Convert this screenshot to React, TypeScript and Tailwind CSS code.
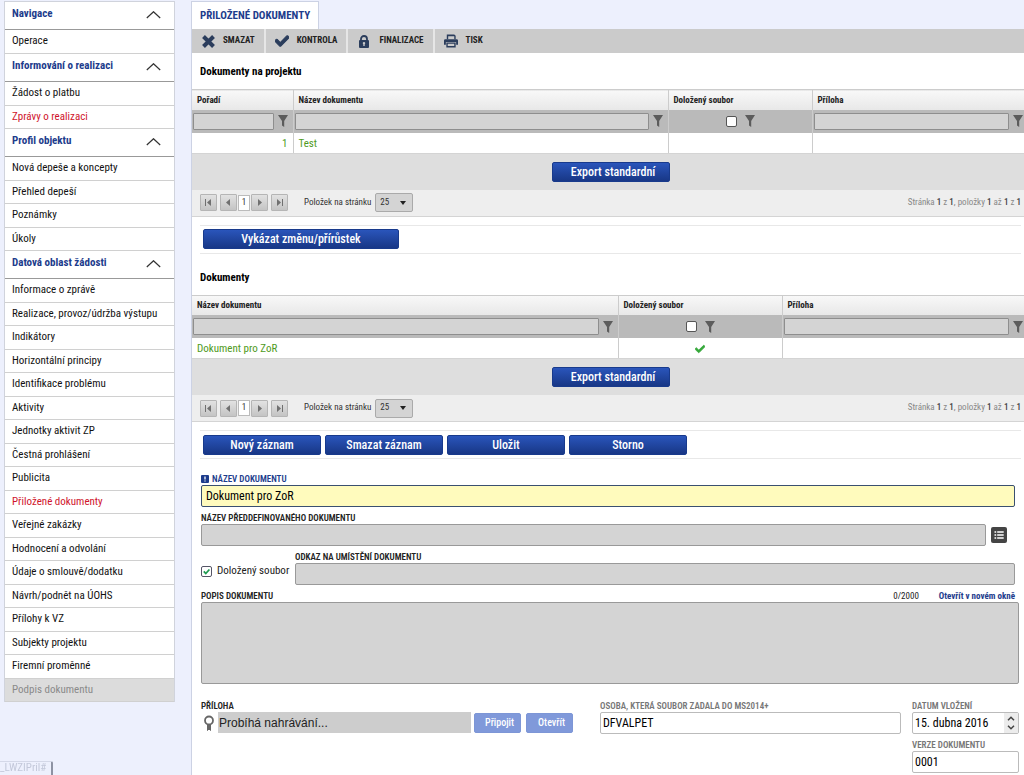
import type { ReactNode } from "react";
import { FaCheck } from "react-icons/fa";

interface NavItem {
  label: string;
  active?: boolean;
  disabled?: boolean;
}

interface NavSection {
  title: string;
  items: NavItem[];
}

const NAVIGATION: NavSection[] = [
  { title: "Navigace", items: [{ label: "Operace" }] },
  {
    title: "Informování o realizaci",
    items: [{ label: "Žádost o platbu" }, { label: "Zprávy o realizaci", active: true }],
  },
  {
    title: "Profil objektu",
    items: [
      { label: "Nová depeše a koncepty" },
      { label: "Přehled depeší" },
      { label: "Poznámky" },
      { label: "Úkoly" },
    ],
  },
  {
    title: "Datová oblast žádosti",
    items: [
      { label: "Informace o zprávě" },
      { label: "Realizace, provoz/údržba výstupu" },
      { label: "Indikátory" },
      { label: "Horizontální principy" },
      { label: "Identifikace problému" },
      { label: "Aktivity" },
      { label: "Jednotky aktivit ZP" },
      { label: "Čestná prohlášení" },
      { label: "Publicita" },
      { label: "Přiložené dokumenty", active: true },
      { label: "Veřejné zakázky" },
      { label: "Hodnocení a odvolání" },
      { label: "Údaje o smlouvě/dodatku" },
      { label: "Návrh/podnět na ÚOHS" },
      { label: "Přílohy k VZ" },
      { label: "Subjekty projektu" },
      { label: "Firemní proměnné" },
      { label: "Podpis dokumentu", disabled: true },
    ],
  },
];

const FIELD = "block h-[22px] rounded-[2px] border text-[12px] leading-5 text-black outline-none";
const FIELD_GRAY = `${FIELD} border-[#999] bg-[#d4d4d4] px-1`;
const FIELD_WHITE = `${FIELD} border-[#bbb] bg-white px-[2px]`;
const LABEL = "text-[9px] leading-3 font-semibold uppercase";

function navItemClass({ active, disabled }: NavItem): string {
  if (disabled) return "bg-[#dcdcdc] text-[#8a8a8a]";
  if (active) return "text-[#d0142c]";
  return "text-[#111]";
}

function Sidebar() {
  return (
    <nav className="mt-px w-[171px] shrink-0 self-start border-x border-t border-[#d0d3dc] bg-white">
      {NAVIGATION.map((section) => (
        <section key={section.title}>
          <button
            type="button"
            className="flex h-7 w-full items-center justify-between border-b border-[#999] pr-[13px] pb-[2px] pl-[7px] text-[11px] font-bold text-[#1d3c8c]"
          >
            {section.title}
            <svg className="h-2 w-[15px]" viewBox="0 0 15 8" fill="none" stroke="#333" strokeWidth="1.2">
              <path d="M.8 7 7.500 .7l6.700 6.300" />
            </svg>
          </button>
          <ul>
            {section.items.map((item) => (
              <li key={item.label} className="border-b border-[#d0d0d0] odd:h-6 even:h-[23px]">
                <a
                  href="#"
                  className={`flex h-full items-center pl-[7px] text-[11px] whitespace-nowrap ${navItemClass(item)}`}
                >
                  {item.label}
                </a>
              </li>
            ))}
          </ul>
        </section>
      ))}
    </nav>
  );
}

function CrossIcon() {
  return (
    <svg className="h-[13px] w-[13px]" viewBox="0 0 13 13" stroke="#2b3d5c" strokeWidth="4">
      <path d="m1.500 1.500 10 10M11.500 1.500l-10 10" />
    </svg>
  );
}

function LockIcon() {
  return (
    <svg className="h-[13px] w-3" viewBox="0 0 12 13" fill="#2b3d5c">
      <path d="M3 5.500V4a3 3 0 0 1 6 0v1.500" fill="none" stroke="#2b3d5c" strokeWidth="1.8" />
      <rect x="1" y="5" width="10" height="8" rx="1" />
      <path d="M6 7a1.200 1.200 0 0 1 .7 2.200V11H5.300V9.200A1.200 1.200 0 0 1 6 7Z" fill="#cbcbcb" />
    </svg>
  );
}

function PrintIcon() {
  return (
    <svg className="h-[14px] w-[15px]" viewBox="0 0 15 14" fill="#2b3d5c">
      <path d="M3 0h8l1.500 1.500V5H11V2H4.500v3H3z" />
      <path d="M1.500 5h12A1.500 1.500 0 0 1 15 6.500V11h-2V8H2v3H0V6.500A1.500 1.500 0 0 1 1.500 5Z" />
      <path d="M2.500 8.500h10V14h-10zM4 10v2.400h7V10z" fillRule="evenodd" />
    </svg>
  );
}

function ToolbarButton({ icon, label }: { icon: ReactNode; label: string }) {
  return (
    <button
      type="button"
      className="flex items-center gap-2 border-r-2 border-[#e6e6e6] px-[9px] text-[9px] font-bold text-[#222] uppercase last:border-r-0"
    >
      <span className="flex w-[14px] justify-center">{icon}</span>
      {label}
    </button>
  );
}

function FunnelButton({ label }: { label: string }) {
  return (
    <button type="button" aria-label={label} className="shrink-0">
      <svg className="block h-3 w-[10px]" viewBox="0 0 10 12" fill="#5c5c5c">
        <path d="M0 0h10L6.200 6v6L4 10.500V6z" />
      </svg>
    </button>
  );
}

function FilterText({ column }: { column: string }) {
  return (
    <div className="flex items-center gap-1">
      <input
        type="text"
        aria-label={`Filtr: ${column}`}
        className="h-[17px] w-0 min-w-0 grow rounded-[1px] border border-[#8e8e8e] bg-[#d4d4d4] px-1 text-[11px] outline-none"
      />
      <FunnelButton label={`Filtrovat ${column}`} />
    </div>
  );
}

function FilterCheck({ column }: { column: string }) {
  return (
    <div className="flex items-center justify-center gap-2">
      <input
        type="checkbox"
        aria-label={`Filtr: ${column}`}
        className="h-[11px] w-[11px] appearance-none rounded-[2px] border border-[#555] bg-white"
      />
      <FunnelButton label={`Filtrovat ${column}`} />
    </div>
  );
}

function BlueButton({ children, className }: { children: ReactNode; className: string }) {
  return (
    <button
      type="button"
      className={`rounded-[2px] border border-[#183a8c] bg-linear-to-b from-[#2a55bb] to-[#183786] text-[12px] font-medium text-white ${className}`}
    >
      {children}
    </button>
  );
}

interface Column {
  name: string;
  width?: string;
  filter: "text" | "check";
}

interface Cell {
  content: ReactNode;
  align?: string;
}

function DataTable({ columns, cells }: { columns: Column[]; cells: Cell[] }) {
  return (
    <table className="w-full table-fixed border-collapse">
      <colgroup>
        {columns.map((column) => (
          <col key={column.name} className={column.width} />
        ))}
      </colgroup>
      <thead>
        <tr className="h-5 border-t border-[#ccc] bg-linear-to-b from-[#f8f8f8] to-[#e8e8e8]">
          {columns.map((column) => (
            <th
              key={column.name}
              className="border-r border-[#ccc] p-0 pl-[5px] text-left text-[9px] leading-4 font-bold text-[#222] last:border-r-0"
            >
              {column.name}
            </th>
          ))}
        </tr>
        <tr className="h-[23px] bg-[#bababa]">
          {columns.map((column) =>
            column.filter === "text" ? (
              <td key={column.name} className="border-r border-[#ccc] py-0 pr-[5px] pl-px last:border-r-0 last:pr-px">
                <FilterText column={column.name} />
              </td>
            ) : (
              <td key={column.name} className="border-r border-[#ccc] p-0">
                <FilterCheck column={column.name} />
              </td>
            ),
          )}
        </tr>
      </thead>
      <tbody>
        <tr className="h-5 bg-white">
          {cells.map((cell, i) => (
            <td
              key={columns[i].name}
              className={`border-r border-[#ccc] px-[5px] pt-[2px] pb-0 text-[11px] leading-4 text-[#4f9a22] last:border-r-0 ${cell.align ?? "text-left"}`}
            >
              {cell.content}
            </td>
          ))}
        </tr>
      </tbody>
    </table>
  );
}

function PagerButton({ label, d }: { label: string; d: string }) {
  return (
    <button
      type="button"
      aria-label={label}
      className="flex h-[17px] w-[17px] items-center justify-center rounded-[1px] border border-[#b5b5b5] bg-linear-to-b from-[#e2e2e2] to-[#c4c4c4]"
    >
      <svg className="h-[7px] w-[7px]" viewBox="0 0 7 7" fill="#707070">
        <path d={d} />
      </svg>
    </button>
  );
}

function TableFooter({ id }: { id: string }) {
  return (
    <>
      <div className="flex h-[37px] items-center justify-center border-t border-[#d4d4d4] bg-[#dedede] pl-[6px]">
        <BlueButton className="h-5 w-[118px] pl-1">Export standardní</BlueButton>
      </div>
      <div className="flex h-[27px] items-center border-b border-[#d4d4d4] bg-[#eee] pr-[3px] pl-2 text-[9px] text-[#333]">
        <div className="flex items-center gap-[3px]">
          <PagerButton label="První stránka" d="M0 0h1v7H0zM6 0v7L2 3.500z" />
          <div className="flex items-center gap-[1px]">
            <PagerButton label="Předchozí stránka" d="M5 0v7L1 3.500z" />
            <span className="flex h-4 w-3 items-center justify-center border border-[#bbb] bg-white">1</span>
            <PagerButton label="Další stránka" d="M2 0v7l4-3.500z" />
          </div>
          <PagerButton label="Poslední stránka" d="M6 0h1v7H6zM1 0v7l4-3.500z" />
        </div>
        <label htmlFor={id} className="mr-1 ml-4">
          Položek na stránku
        </label>
        <div className="grid items-center">
          <select
            id={id}
            defaultValue="25"
            className="col-start-1 row-start-1 h-[19px] w-[38px] appearance-none rounded-[2px] border border-[#aaa] bg-[#d4d4d4] pl-1"
          >
            <option>25</option>
            <option>50</option>
          </select>
          <svg
            className="pointer-events-none col-start-1 row-start-1 mr-[7px] h-1 w-[6px] justify-self-end"
            viewBox="0 0 6 4"
            fill="#222"
          >
            <path d="M0 0h6L3 4z" />
          </svg>
        </div>
        <p className="ml-auto text-[#888]">
          Stránka <b className="font-medium text-[#444]">1</b> z <b className="font-medium text-[#444]">1</b>, položky{" "}
          <b className="font-medium text-[#444]">1</b> až <b className="font-medium text-[#444]">1</b> z{" "}
          <b className="font-medium text-[#444]">1</b>
        </p>
      </div>
    </>
  );
}

function ActionBar({ children }: { children: ReactNode }) {
  return (
    <div className="mt-2 mr-[3px] ml-2 flex h-[29px] items-center gap-1 border-y border-[#e8e8e8] px-[3px]">
      {children}
    </div>
  );
}

function DocumentForm() {
  return (
    <form className="flex flex-col pt-[14px] pr-[9px] pl-[9px] text-[#222]">
      <label htmlFor="nazev" className={`${LABEL} flex items-center gap-[3px] text-[#1d3c8c]`}>
        <svg className="h-2 w-2" viewBox="0 0 8 8">
          <rect width="8" height="8" rx="1" fill="#1d3c8c" />
          <path d="M4 1.500v3M4 5.500v1" stroke="#fff" strokeWidth="1.300" />
        </svg>
        Název dokumentu
      </label>
      <input id="nazev" defaultValue="Dokument pro ZoR" className={`${FIELD} border-[#3a5070] bg-[#fffbbd] px-1`} />

      <label htmlFor="preddef" className={`${LABEL} mt-[5px]`}>
        Název předdefinovaného dokumentu
      </label>
      <div className="flex items-center gap-[5px] pr-2">
        <input id="preddef" readOnly className={`${FIELD_GRAY} w-0 grow`} />
        <button type="button" aria-label="Vybrat ze seznamu">
          <svg className="block h-4 w-4" viewBox="0 0 16 16">
            <rect width="16" height="16" rx="2" fill="#444" />
            <path
              d="M3.500 5h1.700M3.500 8h1.700M3.500 11h1.700M6.200 5h6.500M6.200 8h6.500M6.200 11h6.500"
              stroke="#fff"
              strokeWidth="1.500"
            />
          </svg>
        </button>
      </div>

      <div className="mt-[5px] flex items-end gap-1">
        <label className="flex h-[27px] w-[90px] shrink-0 items-center gap-[5px] text-[11px] whitespace-nowrap">
          <span className="grid">
            <input
              type="checkbox"
              defaultChecked
              className="col-start-1 row-start-1 h-[11px] w-[11px] appearance-none rounded-[2px] border border-[#556] bg-white"
            />
            <svg
              className="pointer-events-none col-start-1 row-start-1 h-[11px] w-[11px]"
              viewBox="0 0 11 11"
              fill="none"
              stroke="#1e9a50"
              strokeWidth="1.800"
            >
              <path d="m2.800 5.300 2 2.200 3.600-4" />
            </svg>
          </span>
          Doložený soubor
        </label>
        <div className="grow">
          <label htmlFor="odkaz" className={`${LABEL} block`}>
            Odkaz na umístění dokumentu
          </label>
          <input id="odkaz" readOnly className={`${FIELD_GRAY} w-full`} />
        </div>
      </div>

      <div className="mt-[5px] flex items-center">
        <label htmlFor="popis" className={LABEL}>
          Popis dokumentu
        </label>
        <span className="ml-auto text-[9px] leading-3">0/2000</span>
        <a href="#" className="ml-5 text-[9px] leading-3 font-bold text-[#1d3c8c]">
          Otevřít v novém okně
        </a>
      </div>
      <textarea
        id="popis"
        readOnly
        className="-mr-1 h-[82px] resize-none rounded-[2px] border border-[#999] bg-[#d4d4d4] outline-none"
      />

      <div className="-mr-1 mt-4 flex items-start">
        <div className="w-[372px]">
          <label htmlFor="priloha" className={`${LABEL} block`}>
            Příloha
          </label>
          <div className="flex items-center">
            <svg className="mr-[3px] ml-[2px] h-4 w-3 shrink-0" viewBox="0 0 12 16" fill="none" stroke="#666">
              <circle cx="6" cy="5.500" r="4" strokeWidth="1.800" />
              <path d="M4.500 9.500v6L6 14l1.500 1.500v-6z" fill="#666" strokeWidth="1" />
            </svg>
            <input
              id="priloha"
              readOnly
              defaultValue="Probíhá nahrávání..."
              className="h-[21px] w-0 grow bg-[#cdcdcd] px-px font-['Liberation_Sans',sans-serif] text-[12px] outline-none"
            />
            <button
              type="button"
              disabled
              className="ml-[3px] h-5 w-[47px] rounded-[2px] border border-[#7d96d6] bg-[#8099da] pl-1 text-[10px] font-medium text-white"
            >
              Připojit
            </button>
            <button
              type="button"
              disabled
              className="ml-[5px] h-5 w-[47px] rounded-[2px] border border-[#7d96d6] bg-[#8099da] pl-1 text-[10px] font-medium text-white"
            >
              Otevřít
            </button>
          </div>
        </div>
        <div className="ml-[27px] grow">
          <label htmlFor="osoba" className={`${LABEL} block text-[#777]`}>
            Osoba, která soubor zadala do MS2014+
          </label>
          <input id="osoba" defaultValue="DFVALPET" className={`${FIELD_WHITE} w-full`} />
        </div>
        <div className="ml-[11px] w-[107px]">
          <label htmlFor="datum" className={`${LABEL} block text-[#777]`}>
            Datum vložení
          </label>
          <div className="flex h-[22px] rounded-[2px] border border-[#bbb] bg-white">
            <input
              id="datum"
              defaultValue="15. dubna 2016"
              className="w-0 grow px-[2px] text-[12px] text-black outline-none"
            />
            <div className="flex w-[14px] flex-col items-center justify-center gap-1 bg-[#ececec]">
              <button type="button" aria-label="Další den">
                <svg className="block h-[5px] w-2" viewBox="0 0 8 5" fill="none" stroke="#444" strokeWidth="1.500">
                  <path d="m1 4.300 3-3 3 3" />
                </svg>
              </button>
              <button type="button" aria-label="Předchozí den">
                <svg className="block h-[5px] w-2" viewBox="0 0 8 5" fill="none" stroke="#444" strokeWidth="1.500">
                  <path d="m1 .7 3 3 3-3" />
                </svg>
              </button>
            </div>
          </div>
          <label htmlFor="verze" className={`${LABEL} mt-[5px] block text-[#777]`}>
            Verze dokumentu
          </label>
          <input id="verze" defaultValue="0001" className={`${FIELD_WHITE} w-full`} />
        </div>
      </div>
    </form>
  );
}

export default function App() {
  return (
    <div className="flex min-h-screen gap-4 bg-[#edf0fd] pl-1 font-['Roboto_Condensed','Liberation_Sans_Narrow',Roboto,sans-serif]">
      <Sidebar />

      <main className="flex min-w-0 grow flex-col">
        <div className="mt-px flex h-7">
          <h1 className="flex items-center border-x border-t border-[#ccd2e4] bg-white px-2 pt-px text-[11px] font-bold text-[#1d3c8c] uppercase">
            Přiložené dokumenty
          </h1>
        </div>
        <div className="grow border-l border-[#ccd2e4] bg-white">
          <div className="flex h-6 bg-[#cbcbcb]">
            <ToolbarButton icon={<CrossIcon />} label="Smazat" />
            <ToolbarButton
              icon={<FaCheck className="h-[14px] w-[14px] stroke-[#2b3d5c] stroke-[40px] text-[#2b3d5c]" />}
              label="Kontrola"
            />
            <ToolbarButton icon={<LockIcon />} label="Finalizace" />
            <ToolbarButton icon={<PrintIcon />} label="Tisk" />
          </div>

          <h2 className="flex h-9 items-center pt-[3px] pl-2 text-[11px] font-bold text-black">
            Dokumenty na projektu
          </h2>
          <DataTable
            columns={[
              { name: "Pořadí", width: "w-[101px]", filter: "text" },
              { name: "Název dokumentu", filter: "text" },
              { name: "Doložený soubor", width: "w-[144px]", filter: "check" },
              { name: "Příloha", width: "w-[212px]", filter: "text" },
            ]}
            cells={[{ content: "1", align: "text-right" }, { content: "Test" }, { content: null }, { content: null }]}
          />
          <TableFooter id="stranka-projekt" />

          <ActionBar>
            <BlueButton className="h-5 w-[196px]">Vykázat změnu/přírůstek</BlueButton>
          </ActionBar>

          <h2 className="mt-[5px] flex h-9 items-center pt-[3px] pl-2 text-[11px] font-bold text-black">Dokumenty</h2>
          <DataTable
            columns={[
              { name: "Název dokumentu", filter: "text" },
              { name: "Doložený soubor", width: "w-[164px]", filter: "check" },
              { name: "Příloha", width: "w-[242px]", filter: "text" },
            ]}
            cells={[
              { content: "Dokument pro ZoR" },
              {
                content: (
                  <FaCheck className="mx-auto block h-[10px] w-[10px] stroke-[#35a83a] stroke-[40px] text-[#35a83a]" />
                ),
              },
              { content: null },
            ]}
          />
          <TableFooter id="stranka-dokumenty" />

          <ActionBar>
            <BlueButton className="h-5 w-[118px]">Nový záznam</BlueButton>
            <BlueButton className="h-5 w-[118px]">Smazat záznam</BlueButton>
            <BlueButton className="h-5 w-[118px]">Uložit</BlueButton>
            <BlueButton className="h-5 w-[118px]">Storno</BlueButton>
          </ActionBar>

          <DocumentForm />
        </div>
      </main>

      <div className="fixed bottom-0 left-0 h-[14px] w-[53px] rounded-tr-[2px] border-t border-r-2 border-t-[#d4d8e8] border-r-[#8d92a3] text-[11px] leading-3 text-[#c3c8da]">
        _LWZIPril#
      </div>
    </div>
  );
}
